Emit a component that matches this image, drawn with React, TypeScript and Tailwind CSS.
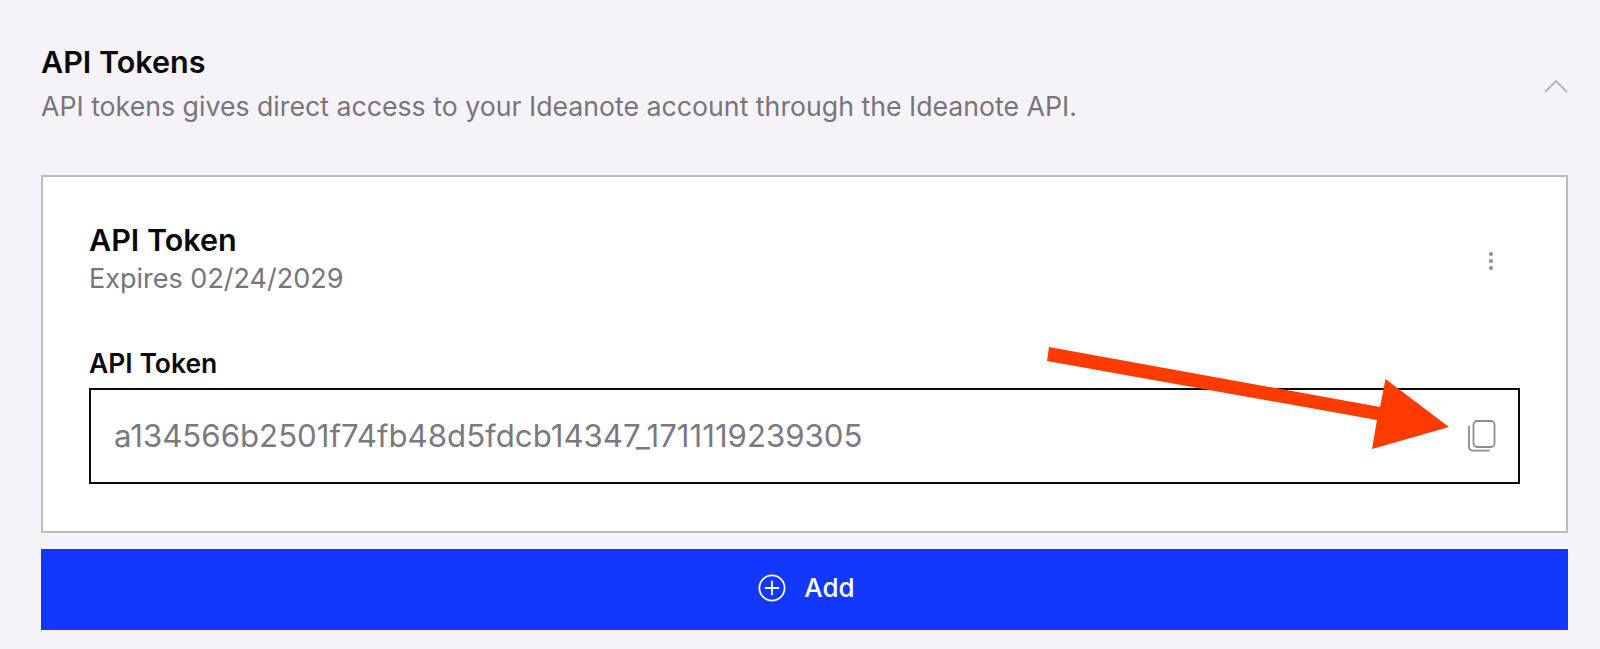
const FONT = "font-['Inter',sans-serif]";

function CopyIcon() {
  return (
    <svg width="29" height="32" viewBox="0 0 29 32" fill="none" className="text-[#8e8c92]">
      <rect x="6.5" y="1" width="21" height="26" rx="3.5" stroke="currentColor" strokeWidth="1.8" />
      <path d="M2 6.5V26.5C2 29 3.6 30.6 6 30.6H22" stroke="currentColor" strokeWidth="1.8" strokeLinecap="round" />
    </svg>
  );
}

function PlusCircle() {
  return (
    <svg width="28" height="28" viewBox="0 0 28 28" fill="none" stroke="white" strokeWidth="1.8">
      <circle cx="14" cy="14" r="12.6" />
      <path d="M14 7.5V20.5M7.5 14H20.5" strokeLinecap="round" />
    </svg>
  );
}

function Arrow() {
  // annotation drawn over the screenshot
  return (
    <svg width="1600" height="649" viewBox="0 0 1600 649" className="pointer-events-none absolute left-0 top-0">
      <polygon
        points="1049,347 1380,407 1385.5,379 1449,427 1372,449 1377,420 1047,361"
        fill="#ff3b00"
      />
    </svg>
  );
}

export default function App() {
  return (
    <div className={`relative h-[649px] w-[1600px] overflow-hidden bg-[#f5f3f7] ${FONT}`}>
      <div className="pl-[41px] pr-[32px] pt-[43px]">
        <div className="flex items-start justify-between">
          <div>
            <div className="text-[30.5px] font-semibold leading-[38px] text-[#0a0a0c]">API Tokens</div>
            <div className="mt-[8px] text-[26.7px] leading-[34px] text-[#77757b]">
              API tokens gives direct access to your Ideanote account through the Ideanote API.
            </div>
          </div>
          <svg width="24" height="14" viewBox="0 0 24 14" fill="none" className="mt-[36px]">
            <path d="M1 13L12 2L23 13" stroke="#b4b2b7" strokeWidth="1.8" />
          </svg>
        </div>

        <div className="mt-[52px] h-[358px] border-2 border-[#bdbcbf] bg-white px-[46px] pt-[44px]">
          <div className="flex items-center justify-between">
            <div>
              <div className="text-[30.5px] font-semibold leading-[38px] text-[#0a0a0c]">API Token</div>
              <div className="mt-[2px] text-[27px] leading-[36px] text-[#77757b]">Expires 02/24/2029</div>
            </div>
            <div className="mr-[27px] mt-[3px] flex flex-col gap-[3px]">
              <span className="h-[4px] w-[4px] rounded-full bg-[#8e8c92]" />
              <span className="h-[4px] w-[4px] rounded-full bg-[#8e8c92]" />
              <span className="h-[4px] w-[4px] rounded-full bg-[#8e8c92]" />
            </div>
          </div>

          <div className="mt-[50px] text-[26.5px] font-semibold leading-[32px] text-[#0a0a0c]">API Token</div>
          <div className="mt-[9px] flex h-[96px] items-center justify-between border-2 border-[#0a0a0c] pl-[23px] pr-[22px]">
            <span className="text-[31.2px] text-[#7b797f]">a134566b2501f74fb48d5fdcb14347_1711119239305</span>
            <CopyIcon />
          </div>
        </div>

        <div className="mt-[16px] flex h-[81px] items-center justify-center gap-[18px] bg-[#1237ff] pb-[4px] pl-[4px] text-[26px] font-medium text-white">
          <PlusCircle />
          <span>Add</span>
        </div>
      </div>
      <Arrow />
    </div>
  );
}
